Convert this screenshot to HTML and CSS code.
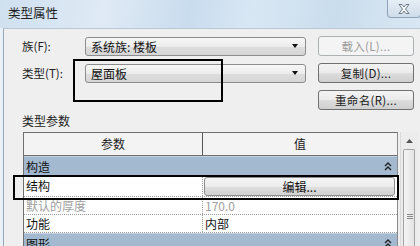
FILE: index.html
```html
<!DOCTYPE html>
<html>
<head>
<meta charset="utf-8">
<link rel="stylesheet" href="styles.css">
</head>
<body>
<div class="window">
  <div class="titlebar">
    <span class="title">类型属性</span>
    <div class="close">
      <svg width="14" height="12" viewBox="0 0 14 12"><path d="M2 1.5 L5 1.5 L7 4 L9 1.5 L12 1.5 L8.5 6 L12 10.5 L9 10.5 L7 8 L5 10.5 L2 10.5 L5.5 6 Z" fill="#f4f6f8" stroke="#6d7a88" stroke-width="1"/></svg>
    </div>
  </div>
  <div class="client">
    <div class="form">
      <div class="lbl">族(F):</div>
      <div class="combo"><span>系统族: 楼板</span><span class="arrow"></span></div>
      <div class="btn disabled">载入(L)...</div>
      <div class="lbl">类型(T):</div>
      <div class="combo"><span>屋面板</span><span class="arrow"></span></div>
      <div class="btn">复制(D)...</div>
      <div></div>
      <div></div>
      <div class="btn">重命名(R)...</div>
    </div>
    <div class="section">类型参数</div>
    <div class="grid-wrap">
      <div class="table">
        <div class="thead">
          <div class="th c1">参数</div>
          <div class="th c2">值</div>
        </div>
        <div class="cat"><span>构造</span>
          <svg class="chev" width="8" height="9" viewBox="0 0 8 9"><path d="M1 4 L4 1 L7 4 M1 8 L4 5 L7 8" fill="none" stroke="#222" stroke-width="1.4"/></svg>
        </div>
        <div class="row tall">
          <div class="td c1">结构</div>
          <div class="td c2"><div class="edit">编辑...</div></div>
        </div>
        <div class="row">
          <div class="td c1 gray">默认的厚度</div>
          <div class="td c2 gray">170.0</div>
        </div>
        <div class="row">
          <div class="td c1">功能</div>
          <div class="td c2">内部</div>
        </div>
        <div class="cat"><span>图形</span>
          <svg class="chev" width="8" height="9" viewBox="0 0 8 9"><path d="M1 4 L4 1 L7 4 M1 8 L4 5 L7 8" fill="none" stroke="#222" stroke-width="1.4"/></svg>
        </div>
      </div>
      <div class="scrollbar">
        <div class="sb-up"><svg width="7" height="4" viewBox="0 0 7 4"><path d="M0 4 L3.5 0 L7 4 Z" fill="#555"/></svg></div>
        <div class="sb-thumb"><div class="grip"></div></div>
      </div>
    </div>
  </div>
  <div class="mark mark-type"></div>
  <div class="mark mark-row"></div>
</div>
</body>
</html>
```
FILE: styles.css
```css
* { box-sizing: border-box; }
html, body { margin: 0; padding: 0; }
body {
  width: 420px;
  height: 246px;
  overflow: hidden;
  font-family: "Noto Sans CJK SC", "DejaVu Sans", sans-serif;
  font-size: 12px;
  color: #111;
  background: #e9f0f7;
}
.window {
  position: relative;
  width: 420px;
  height: 246px;
  display: flex;
  flex-direction: column;
}
.titlebar {
  height: 28px;
  flex: none;
  display: flex;
  justify-content: space-between;
  align-items: flex-start;
  background: linear-gradient(100deg, #cfe0ef 0%, #dfeaf5 25%, #c9dcee 45%, #d8e7f4 60%, #cadded 80%, #d9e7f3 100%);
}
.title {
  margin: 5px 0 0 8px;
  font-size: 12.5px;
  color: #1e1e1e;
  line-height: 16px;
}
.close {
  width: 34px;
  height: 18px;
  margin-right: -1px;
  border: 1px solid #8fa3b8;
  border-top: none;
  border-radius: 0 0 4px 4px;
  background: linear-gradient(#e6eef6, #cfdcea);
  display: flex;
  align-items: center;
  justify-content: center;
}
.client {
  flex: 1;
  margin-left: 3px;
  border-left: 1px solid #9aa7b4;
  border-top: 1px solid #b8c6d4;
  background: #efefef;
  padding: 7px 0 0 18px;
  display: flex;
  flex-direction: column;
}
.form {
  display: grid;
  grid-template-columns: 51px 221px 96px;
  grid-auto-rows: 20px;
  column-gap: 12px;
  row-gap: 7px;
  align-items: center;
}
.lbl {
  font-size: 11.5px;
  color: #222;
  line-height: 20px;
  white-space: nowrap;
}
.combo {
  height: 19px;
  border: 1px solid #8a8c8e;
  border-radius: 3px;
  background: linear-gradient(#f7f7f7 0%, #ececec 50%, #dedede 51%, #d6d6d6 100%);
  display: flex;
  align-items: center;
  justify-content: space-between;
  padding: 0 7px 0 5px;
  font-size: 12px;
  line-height: 17px;
}
.arrow {
  width: 0;
  height: 0;
  border-left: 3.5px solid transparent;
  border-right: 3.5px solid transparent;
  border-top: 4px solid #111;
}
.btn {
  height: 20px;
  border: 1px solid #707070;
  border-radius: 3px;
  background: linear-gradient(#f3f3f3 0%, #ebebeb 50%, #dddddd 51%, #cfcfcf 100%);
  text-align: center;
  line-height: 18px;
  font-size: 11.5px;
  color: #1a1a1a;
  letter-spacing: 0.3px;
}
.btn.disabled {
  border-color: #adb2b5;
  background: #f4f4f4;
  color: #9b9b9b;
}
.section {
  margin-top: 2px;
  height: 18px;
  line-height: 18px;
  font-size: 12px;
  color: #222;
}
.grid-wrap {
  margin-top: 2px;
  margin-left: 1px;
  display: flex;
  flex: 1;
}
.table {
  width: 375px;
  border-left: 1px solid #6f6f6f;
  border-top: 1px solid #6f6f6f;
  border-right: 1px solid #8a8a8a;
  background: #fff;
  display: flex;
  flex-direction: column;
}
.thead {
  display: flex;
  height: 23px;
  flex: none;
  background: #f3f3f3;
  border-bottom: 1px solid #6f6f6f;
}
.th {
  text-align: center;
  line-height: 22px;
  font-size: 12px;
  color: #222;
}
.c1 { width: 179px; flex: none; }
.c2 { flex: 1; }
.th.c1 { border-right: 1px solid #555; }
.cat {
  height: 19px;
  flex: none;
  background: #a2b9d0;
  border-top: 1px solid #c2d2e2;
  display: flex;
  align-items: center;
  justify-content: space-between;
  padding: 0 5px 0 2px;
  line-height: 17px;
  font-size: 12px;
  color: #111;
}
.row {
  display: flex;
  height: 18px;
  flex: none;
  border-bottom: 1px dotted #9a9a9a;
}
.row.tall { height: 22px; }
.td {
  line-height: 17px;
  padding-left: 2px;
  font-size: 12px;
  color: #111;
}
.td.c1 { border-right: 1px dotted #9a9a9a; }
.td.gray { color: #a0a0a0; }
.row.tall .td.c1 { line-height: 21px; }
.row.tall .td.c2 { padding: 2px 2px 1px 1px; }
.edit {
  height: 19px;
  border: 1px solid #8c8c8c;
  border-radius: 3px;
  background: linear-gradient(#f5f5f5 0%, #ececec 50%, #dfdfdf 51%, #d2d2d2 100%);
  text-align: center;
  line-height: 17px;
  font-size: 12px;
}
.scrollbar {
  width: 18px;
  margin-left: 2px;
  background: #ececec;
  border-left: 1px solid #dadada;
  display: flex;
  flex-direction: column;
}
.sb-up {
  height: 17px;
  display: flex;
  align-items: center;
  justify-content: center;
}
.sb-thumb {
  flex: 1;
  margin: 0 3px 0 2px;
  border: 1px solid #a3a3a3;
  border-bottom: none;
  border-radius: 2px 2px 0 0;
  background: linear-gradient(90deg, #f4f4f4, #e4e4e4);
  position: relative;
}
.grip {
  position: absolute;
  left: 3px;
  top: 64px;
  width: 6px;
  height: 6px;
  background: repeating-linear-gradient(#8a8a8a 0 1px, transparent 1px 2px);
}
.mark {
  position: absolute;
  border: 2px solid #000;
}
.mark-type {
  left: 73px;
  top: 59px;
  width: 150px;
  height: 43px;
}
.mark-row {
  left: 13px;
  top: 175px;
  width: 386px;
  height: 25px;
}
```
